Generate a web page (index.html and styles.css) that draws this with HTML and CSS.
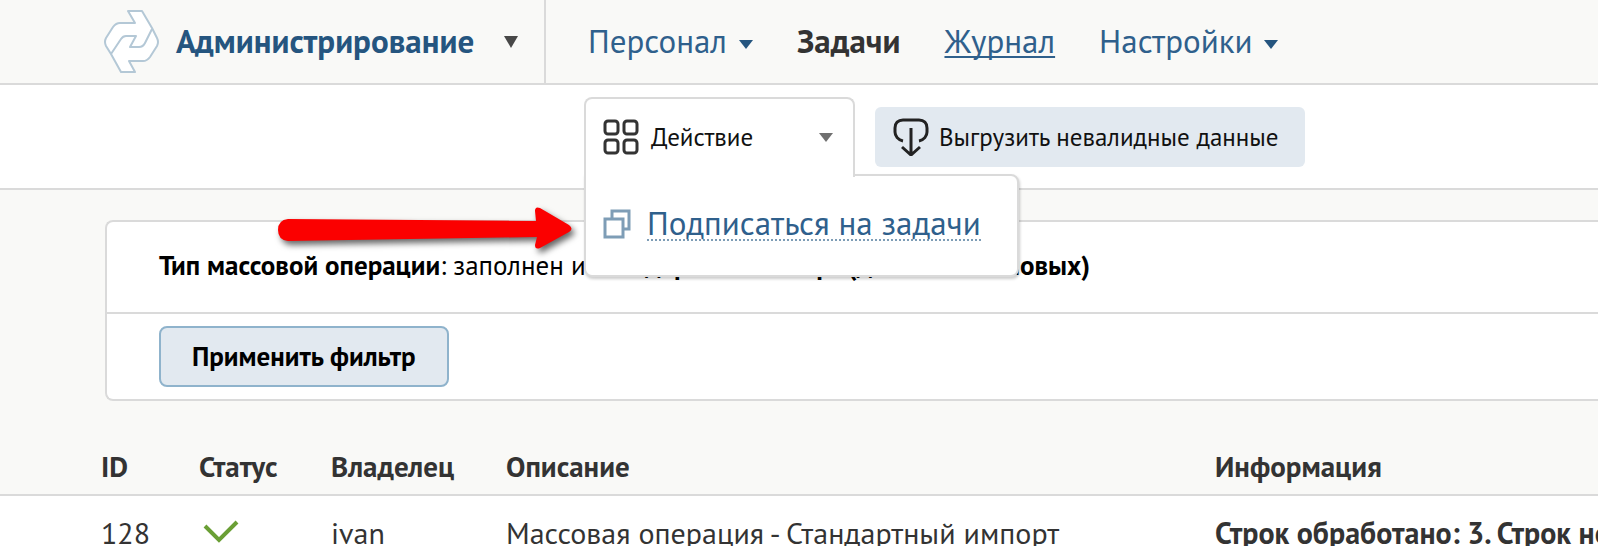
FILE: index.html
```html
<!DOCTYPE html>
<html lang="ru">
<head>
<meta charset="utf-8">
<meta name="viewport" content="width=device-width, initial-scale=1">
<title>Администрирование — Задачи</title>
<link rel="stylesheet" href="styles.css">
</head>
<body>
<header class="header">
  <button class="brand" type="button">
    <svg class="brand-logo" viewBox="0 0 56 64" aria-hidden="true">
      <g fill="#fff" stroke="#b4c8d6" stroke-width="2" stroke-linejoin="round">
        <path d="M24 1H38L48 18L53 28Q55 32 53 36L46 47Q43 51 39 51H25L31 62H17L7 44L2 36Q0 32 2 28L9 17Q12 13 16 13H31Z"/>
        <path d="M7 44L17 29Q19 26 22 26H32L26 37H35Q39 37 41 33L48 19" fill="none"/>
      </g>
    </svg>
    <span class="brand-name">Администрирование</span>
    <span class="caret caret-dark"></span>
  </button>
  <nav class="nav">
    <a class="nav-link" href="#">Персонал<span class="caret caret-blue"></span></a>
    <a class="nav-link nav-current" href="#">Задачи</a>
    <a class="nav-link nav-hover" href="#">Журнал</a>
    <a class="nav-link" href="#">Настройки<span class="caret caret-blue"></span></a>
  </nav>
</header>

<div class="toolbar">
  <div class="dropdown">
    <button class="dropdown-tab" type="button" aria-expanded="true">
      <svg class="grid-icon" viewBox="0 0 36 36" aria-hidden="true">
        <g fill="none" stroke="#333" stroke-width="3">
          <rect x="2" y="2" width="13" height="13" rx="3"/>
          <rect x="21" y="2" width="13" height="13" rx="3"/>
          <rect x="2" y="21" width="13" height="13" rx="3"/>
          <rect x="21" y="21" width="13" height="13" rx="3"/>
        </g>
      </svg>
      <span>Действие</span>
      <span class="caret caret-gray"></span>
    </button>
    <div class="dropdown-menu">
      <svg class="copy-icon" viewBox="0 0 28 30" aria-hidden="true">
        <g fill="none" stroke="#7e9db6" stroke-width="3">
          <path d="M9 9V2H26V20H20"/>
          <rect x="2" y="10" width="18" height="18"/>
        </g>
      </svg>
      <a class="menu-link" href="#">Подписаться на задачи</a>
    </div>
  </div>
  <button class="export" type="button">
    <svg class="export-icon" viewBox="0 0 36 38" aria-hidden="true">
      <g fill="none" stroke="#222">
        <path d="M10 23C5 22 2 18 2 14V10C2 5 5 2 10 2H26C31 2 34 5 34 10V14C34 18 31 22 26 23" stroke-width="3"/>
        <path d="M18 10V36M9 29L18 37L27 29" stroke-width="3"/>
      </g>
    </svg>
    <span>Выгрузить невалидные данные</span>
  </button>
</div>

<main class="content">
  <form class="filter">
    <div class="filter-row filter-text"><b>Тип массовой операции</b>: заполнен и <b>Стандартный импорт (добавление новых)</b></div>
    <div class="filter-row filter-actions"><button class="apply" type="button">Применить фильтр</button></div>
  </form>
</main>

<table class="tasks">
  <colgroup><col class="col-id"><col class="col-status"><col class="col-owner"><col class="col-text"><col></colgroup>
  <thead>
    <tr><th>ID</th><th>Статус</th><th>Владелец</th><th>Описание</th><th>Информация</th></tr>
  </thead>
  <tbody>
    <tr>
      <td>128</td>
      <td><svg class="check" viewBox="0 0 36 24" role="img" aria-label="Выполнено"><path d="M2 6L16 20L34 2" fill="none" stroke="#6a9f35" stroke-width="4"/></svg></td>
      <td>ivan</td>
      <td>Массовая операция - Стандартный импорт</td>
      <td><b>Строк обработано: 3. Строк не обработано: 0</b></td>
    </tr>
  </tbody>
</table>

<svg class="pointer" viewBox="0 0 308 56" aria-hidden="true">
  <path d="M14 13L262 15L261 5Q261 0 266 2L295 19Q300 23 295 26L266 42Q261 44 261 39L263 31L14 35Q4 34 4 24Q4 14 14 13Z" fill="#fb0000"/>
</svg>
</body>
</html>
```
FILE: styles.css
```css
* { box-sizing: border-box; }

body {
  margin: 0;
  background: #f9f9f7;
  color: #333;
  font-family: "PT Sans", "Noto Sans", sans-serif;
  font-size: 27px;
  line-height: 32px;
  overflow: hidden;
}

button {
  font: inherit;
  border: 0;
  cursor: pointer;
}

.header {
  display: flex;
  height: 85px;
  border-bottom: 2px solid #dadada;
}

.brand {
  display: flex;
  align-items: center;
  width: 546px;
  padding: 0 26px 0 104px;
  background: none;
  border-right: 2px solid #dadada;
}

.brand-logo { width: 56px; height: 64px; }

.brand-name {
  margin-left: 16px;
  padding-bottom: 2px;
  color: #25557f;
  font-size: 33px;
  font-weight: 700;
}

.caret {
  border: 7px solid transparent;
  border-bottom: 0;
}

.caret-dark {
  margin-left: auto;
  border-top: 12px solid #484848;
}

.caret-blue {
  display: inline-block;
  margin-left: 12px;
  border-top: 9px solid #25557f;
  vertical-align: 4px;
}

.caret-gray {
  margin-left: auto;
  border-top: 9px solid #707070;
}

.nav {
  display: flex;
  align-items: center;
  gap: 44px;
  padding: 0 0 2px 42px;
  font-size: 33px;
  white-space: nowrap;
}

.nav-link { color: #2f608c; text-decoration: none; }
.nav-current { color: #333; font-weight: 700; }
.nav-hover { text-decoration: underline; text-decoration-thickness: 2px; text-decoration-skip-ink: none; text-underline-offset: 3px; }

.toolbar {
  display: flex;
  gap: 20px;
  height: 105px;
  padding: 12px 0 0 584px;
  background: #fff;
  border-bottom: 2px solid #dadada;
}

.dropdown { position: relative; z-index: 2; width: 271px; }

.dropdown-tab {
  position: relative;
  z-index: 1;
  display: flex;
  align-items: center;
  width: 100%;
  height: 80px;
  padding: 0 20px 2px 17px;
  background: #fff;
  border: 2px solid #dadada;
  border-bottom: 0;
  border-radius: 8px 8px 0 0;
  color: #111;
  font-size: 25px;
}

.grid-icon { width: 36px; height: 36px; margin-right: 12px; }

.dropdown-menu {
  position: absolute;
  top: 77px;
  left: 0;
  display: flex;
  align-items: center;
  gap: 16px;
  height: 103px;
  padding: 0 36px 4px 17px;
  background: #fff;
  border: 2px solid #dadada;
  border-radius: 0 8px 8px 8px;
  box-shadow: 1px 2px 3px rgba(0, 0, 0, .2);
  white-space: nowrap;
}

.copy-icon { width: 28px; height: 30px; }

.menu-link {
  border-bottom: 2px dotted #7e9db6;
  color: #2f608c;
  font-size: 33px;
  text-decoration: none;
}

.export {
  display: flex;
  align-items: center;
  gap: 10px;
  height: 60px;
  margin-top: 10px;
  padding: 0 26px 0 18px;
  background: #e2e9f0;
  border-radius: 6px;
  color: #111;
  font-size: 25px;
  white-space: nowrap;
}

.export-icon { width: 36px; height: 38px; }

.content { padding: 30px 0 0 105px; }

.filter {
  background: #fff;
  border: 2px solid #dadada;
  border-right: 0;
  border-radius: 8px 0 0 8px;
  color: #000;
}

.filter-row { padding: 0 52px; white-space: nowrap; }
.filter-text { padding-top: 27px; padding-bottom: 31px; }
.filter-actions { padding-top: 12px; padding-bottom: 12px; border-top: 2px solid #dadada; }

.apply {
  height: 61px;
  padding: 0 31px 2px;
  background: #e2e9f0;
  border: 2px solid #8fb3cc;
  border-radius: 8px;
  color: #000;
  font-weight: 700;
}

.tasks {
  width: 100%;
  margin-top: 32px;
  border-collapse: collapse;
  table-layout: fixed;
  white-space: nowrap;
}

.col-id { width: 199px; }
.col-status { width: 132px; }
.col-owner { width: 175px; }
.col-text { width: 709px; }

.tasks th,
.tasks td { text-align: left; vertical-align: top; }
.tasks th { padding: 17px 0 12px; border-bottom: 2px solid #dadada; font-size: 29px; }
.tasks td { padding: 21px 0 0; font-size: 30px; }
.tasks th:first-child,
.tasks td:first-child { padding-left: 101px; }
.tasks tbody { background: #fff; }

.check { display: block; width: 36px; height: 24px; margin: 3px 0 0 4px; }

.pointer {
  position: absolute;
  z-index: 3;
  top: 206px;
  left: 274px;
  width: 308px;
  height: 56px;
  filter: drop-shadow(3px 4px 3px rgba(0, 0, 0, .6));
}
```
